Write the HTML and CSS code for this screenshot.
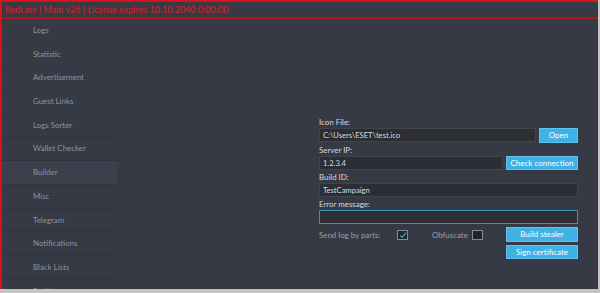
FILE: index.html
```html
<!DOCTYPE html>
<html lang="en">
<head>
    <meta charset="UTF-8">
    <title>RedLine | Main v26</title>
    <link rel="stylesheet" href="styles.css">
</head>
<body>
    <div class="window">
        <header class="titlebar">RedLine | Main v26 | License expires 10.10.2040 0:00:00</header>
        <div class="content">
            <aside class="sidebar">
                <nav>
                    <a href="#">Logs</a>
                    <a href="#">Statistic</a>
                    <a href="#">Advertisement</a>
                    <a href="#">Guest Links</a>
                    <a href="#">Logs Sorter</a>
                    <a href="#">Wallet Checker</a>
                    <a href="#" class="active">Builder</a>
                    <a href="#">Misc</a>
                    <a href="#">Telegram</a>
                    <a href="#">Notifications</a>
                    <a href="#">Black Lists</a>
                    <a href="#">Settings</a>
                </nav>
            </aside>
            <main class="builder">
                <form class="form">
                    <label class="label">Icon File:</label>
                    <div class="row">
                        <input class="field" type="text" value="C:\Users\ESET\test.ico">
                        <button type="button" class="btn btn-open">Open</button>
                    </div>
                    <label class="label">Server IP:</label>
                    <div class="row">
                        <input class="field" type="text" value="1.2.3.4">
                        <button type="button" class="btn btn-wide">Check connection</button>
                    </div>
                    <label class="label">Build ID:</label>
                    <input class="field" type="text" value="TestCampaign">
                    <label class="label">Error message:</label>
                    <input class="field focused" type="text" value="">
                    <div class="bottom">
                        <div class="options">
                            <span class="opt-label">Send log by parts:</span>
                            <span class="check">
                                <svg viewBox="0 0 10 10" width="8" height="8"><path d="M1.5 5.5 L4 8 L8.5 2" fill="none" stroke="#3daee9" stroke-width="1.4"/></svg>
                            </span>
                            <span class="opt-label">Obfuscate</span>
                            <span class="check"></span>
                        </div>
                        <div class="actions">
                            <button type="button" class="btn btn-wide">Build stealer</button>
                            <button type="button" class="btn btn-wide">Sign certificate</button>
                        </div>
                    </div>
                </form>
            </main>
        </div>
    </div>
</body>
</html>
```

FILE: styles.css
```css
body {
    margin: 0;
    background: #c4c4c4;
    font-family: Lato, "Open Sans", sans-serif;
}
.window {
    width: 596px;
    height: 287px;
    background: #363a45;
    border-left: 2px solid #d8121b;
    border-top: 2px solid #d8121b;
    overflow: hidden;
}
/* Title bar */
.titlebar {
    height: 15px;
    line-height: 15px;
    padding-left: 3px;
    color: #e01a22;
    font-size: 9px;
    border-bottom: 2px solid #b5131a;
}
.content {
    display: flex;
}
/* Sidebar */
.sidebar {
    width: 115px;
    flex-shrink: 0;
}
.sidebar nav a {
    display: block;
    box-sizing: border-box;
    height: 23.7px;
    line-height: 23px;
    padding-left: 31px;
    color: #8c92a0;
    font-size: 7.9px;
    text-decoration: none;
    border-bottom: 1px solid #31343e;
}
.sidebar nav a.active {
    background: #3c404c;
}
/* Builder form */
.builder {
    flex: 1;
    padding: 98px 0 0 202px;
}
.form {
    width: 259px;
    display: flex;
    flex-direction: column;
}
.label {
    height: 11px;
    line-height: 11px;
    margin-top: 2px;
    color: #d6d8dc;
    font-size: 7.9px;
}
.label:first-child {
    margin-top: 0;
}
.row {
    display: flex;
    gap: 3px;
}
.field {
    box-sizing: border-box;
    width: 100%;
    height: 14px;
    margin: 0;
    padding: 0 3px;
    background: #2c2e33;
    border: 1px solid #41444c;
    color: #dadada;
    font-family: inherit;
    font-size: 7.6px;
    outline: none;
}
.row .field {
    flex: 1;
}
.field.focused {
    border-color: #3b8fc4;
}
.btn {
    box-sizing: border-box;
    height: 14.5px;
    margin: 0;
    padding: 0;
    background: #3fb1e5;
    border: 1px solid #5cc2ee;
    color: #fff;
    font-family: inherit;
    font-size: 8px;
    cursor: pointer;
    flex-shrink: 0;
}
.btn-open {
    width: 39px;
}
.btn-wide {
    width: 72px;
}
.bottom {
    display: flex;
    justify-content: space-between;
    margin-top: 3px;
}
.options {
    display: grid;
    grid-template-columns: 78px 11px 24px 40px 11px;
    grid-template-areas: "a b . c d";
    align-items: center;
    height: 15px;
    color: #9a9ea7;
    font-size: 7.9px;
}
.options > :nth-child(1) { grid-area: a; }
.options > :nth-child(2) { grid-area: b; }
.options > :nth-child(3) { grid-area: c; }
.options > :nth-child(4) { grid-area: d; }
.check {
    box-sizing: border-box;
    width: 11px;
    height: 10px;
    background: #232427;
    border: 1px solid #8a8c93;
    display: flex;
    align-items: center;
    justify-content: center;
}
.actions {
    display: flex;
    flex-direction: column;
    gap: 3px;
}
```
